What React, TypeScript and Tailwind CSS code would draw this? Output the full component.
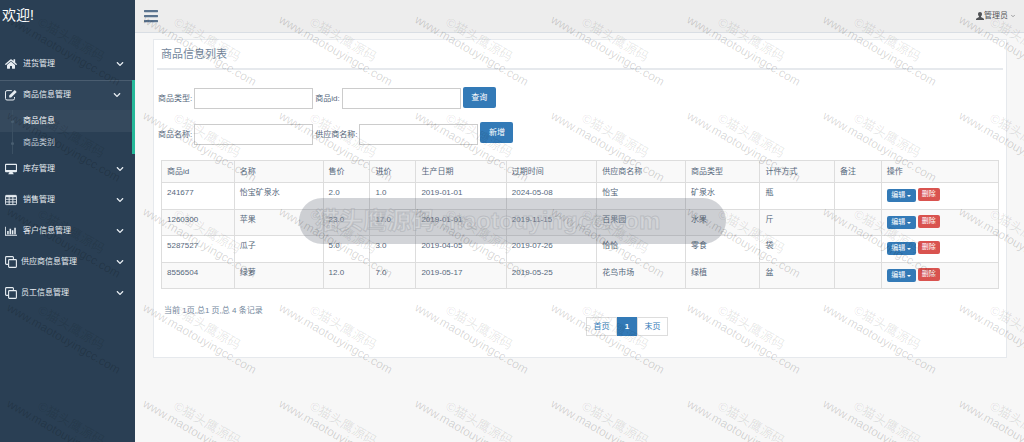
import { FaBars, FaChevronDown, FaHome } from 'react-icons/fa';
import { ChevronDown } from 'lucide-react';

type IconProps = { className?: string };

const EditIcon = ({ className }: IconProps) => (
  <svg viewBox="0 0 12 12" className={className} fill="none" stroke="currentColor">
    <path d="M6.800 1.600H2A1.500 1.500 0 0 0 .5 3.100v6.400A1.500 1.500 0 0 0 2 11h6a1.500 1.500 0 0 0 1.500-1.500V8" />
    <path d="M4.200 8.400V6.600L9.800 1l1.900 1.900-5.600 5.500z" fill="currentColor" stroke="none" />
  </svg>
);

const DesktopIcon = ({ className }: IconProps) => (
  <svg viewBox="0 0 12 12" className={className} fill="currentColor">
    <path
      fillRule="evenodd"
      d="M.9.8h10.200c.5 0 .9.4.9.9v6.600c0 .5-.4.9-.9.9H7.600l.5 1.400h.6v.7H3.300v-.7h.6l.5-1.400H.9A.9.9 0 0 1 0 8.300V1.700C0 1.200.4.8.9.8zM1.100 1.900v5h9.800v-5z"
    />
  </svg>
);

const TableIcon = ({ className }: IconProps) => (
  <svg viewBox="0 0 13 12" className={className} fill="none" stroke="currentColor">
    <rect x="0.5" y="1" width="12" height="10" rx="0.8" />
    <path d="M1 2h11" strokeWidth="2" />
    <path d="M1 5.2h11M1 8.1h11M4.5 2v9M8.5 2v9" />
  </svg>
);

const BarChartIcon = ({ className }: IconProps) => (
  <svg viewBox="0 0 14 12" className={className} fill="currentColor">
    <path d="M0 1h1v9.500h13v1H0zM2.500 6h1.800v3.700H2.500zM5.300 3.500h1.800v6.200H5.300zM8 5h1.800v4.700H8zM10.800 2.200h1.800v7.500h-1.800z" />
  </svg>
);

const CloneIcon = ({ className }: IconProps) => (
  <svg viewBox="0 0 12 12" className={className} fill="none" stroke="currentColor" strokeWidth="1.1">
    <rect x="3.6" y="3.6" width="7.8" height="7.8" rx="0.8" />
    <path d="M3.6 8.4H1.4a.8.8 0 0 1-.8-.8V1.4a.8.8 0 0 1 .8-.8h6.2a.8.8 0 0 1 .8.8v2.2" />
  </svg>
);

const UserIcon = ({ className }: IconProps) => (
  <svg viewBox="0 0 16 16" className={className} fill="currentColor">
    <path d="M8 0c2.500 0 4 1.800 4 4.300 0 1.700-.8 3.300-2 4.200v1.200c0 .5.300.8.800 1l3.700 1.600c.9.400 1.500 1 1.500 2V16H0v-1.700c0-1 .6-1.600 1.500-2l3.700-1.600c.5-.2.8-.5.8-1V8.500C4.800 7.600 4 6 4 4.300 4 1.800 5.500 0 8 0z" />
  </svg>
);

const menu = [
  { label: '进货管理', icon: FaHome },
  {
    label: '商品信息管理',
    icon: EditIcon,
    children: ['商品信息', '商品类别'],
  },
  { label: '库存管理', icon: DesktopIcon },
  { label: '销售管理', icon: TableIcon },
  { label: '客户信息管理', icon: BarChartIcon },
  { label: '供应商信息管理', icon: CloneIcon },
  { label: '员工信息管理', icon: CloneIcon },
];

const columns = [
  { title: '商品id', width: 'w-[8.7%]' },
  { title: '名称', width: 'w-[10.6%]' },
  { title: '售价', width: 'w-[5.6%]' },
  { title: '进价', width: 'w-[5.5%]' },
  { title: '生产日期', width: 'w-[10.8%]' },
  { title: '过期时间', width: 'w-[10.8%]' },
  { title: '供应商名称', width: 'w-[10.6%]' },
  { title: '商品类型', width: 'w-[8.9%]' },
  { title: '计件方式', width: 'w-[8.9%]' },
  { title: '备注', width: 'w-[5.6%]' },
  { title: '操作', width: 'w-[14%]' },
];

const goods = [
  ['241677', '怡宝矿泉水', '2.0', '1.0', '2019-01-01', '2024-05-08', '怡宝', '矿泉水', '瓶', ''],
  ['1260300', '苹果', '23.0', '17.0', '2019-01-01', '2019-11-15', '百果园', '水果', '斤', ''],
  ['5287527', '瓜子', '5.0', '3.0', '2019-04-05', '2019-07-26', '恰恰', '零食', '袋', ''],
  ['8556504', '绿萝', '12.0', '7.0', '2019-05-17', '2019-05-25', '花鸟市场', '绿植', '盆', ''],
];

const Sidebar = () => (
  <aside className="w-[135px] shrink-0 bg-[#2a3f54] text-[#e7edf2]">
    <h1 className="h-[48px] pl-[2px] pt-[5px] text-[14px] leading-[20px] text-white">欢迎!</h1>
    <nav>
      {menu.map((item) => (
        <div key={item.label} className={item.children ? '-mb-px mt-px border-r-[3px] border-[#26b99a]' : ''}>
          <button
            type="button"
            className={`flex w-full items-center pl-[5px] pr-[11px] text-left text-[8px] ${
              item.children ? 'h-[30px] border-t border-[#4a5d70] bg-[#30455a] pb-[2px]' : 'h-[31px]'
            }`}
          >
            <item.icon className="h-[12px] w-[12px] shrink-0" />
            <span className={`grow whitespace-nowrap ${item.icon === CloneIcon ? 'ml-[4px]' : 'ml-[6px]'}`}>
              {item.label}
            </span>
            <FaChevronDown className="h-[8px] w-[8px] shrink-0" />
          </button>
          {item.children && (
            <ul className="text-[8px]">
              {item.children.map((child, i) => (
                <li key={child} className={i === 0 ? 'bg-[#35495d]' : ''}>
                  <a
                    href="#"
                    className={`flex h-[22px] items-center pl-[11px] ${i === 0 ? 'text-white' : 'text-[#c4cfda]'}`}
                  >
                    <span className="flex h-full w-[3px] flex-col items-center">
                      <span className="w-px grow bg-[#3b5063]" />
                      <span className="h-[3px] w-[3px] rounded-full bg-[#4a5f72]" />
                      <span className="w-px grow bg-[#3b5063]" />
                    </span>
                    <span className="ml-[9px]">{child}</span>
                  </a>
                </li>
              ))}
            </ul>
          )}
        </div>
      ))}
    </nav>
  </aside>
);

const TopBar = () => (
  <header className="flex h-[33px] items-center justify-between border-b border-[#d9dee4] bg-[#ededed] pl-[9px] pr-[8px]">
    <button type="button" aria-label="菜单" className="text-[#5a738e]">
      <FaBars className="h-[16px] w-[14px]" />
    </button>
    <button type="button" className="flex items-center text-[8px] text-[#515356]">
      <UserIcon className="h-[8px] w-[8px]" />
      管理员
      <ChevronDown className="ml-[2px] h-[6px] w-[6px]" />
    </button>
  </header>
);

const Field = ({ id, label }: { id: string; label: string }) => (
  <>
    <label htmlFor={id} className="mr-[2px]">
      {label}
    </label>
    <input id={id} type="text" className="mr-[2px] h-[21px] w-[119px] border border-[#ccc] bg-white px-1" />
  </>
);

const SearchForm = () => (
  <form className="px-[1px] pt-[17px] text-[8px]">
    <div className="flex h-[35px] items-start">
      <div className="flex items-center pt-px">
        <Field id="type" label="商品类型:" />
        <Field id="goods-id" label="商品id:" />
      </div>
      <button type="button" className="h-[21px] w-[33px] rounded-[2px] bg-[#337ab7] text-white">
        查询
      </button>
    </div>
    <div className="flex items-start">
      <div className="flex items-center pt-[2px]">
        <Field id="goods-name" label="商品名称:" />
        <Field id="supplier" label="供应商名称:" />
      </div>
      <button type="button" className="h-[21px] w-[33px] rounded-[2px] bg-[#337ab7] text-white">
        新增
      </button>
    </div>
  </form>
);

const GoodsTable = () => (
  <table className="w-full table-fixed border-collapse text-left text-[8px]">
    <thead>
      <tr className="h-[22px] bg-[#f9f9f9]">
        {columns.map((col) => (
          <th key={col.title} className={`border border-[#ddd] px-[5px] font-normal ${col.width}`}>
            {col.title}
          </th>
        ))}
      </tr>
    </thead>
    <tbody>
      {goods.map((row, i) => (
        <tr key={row[0]} className={i % 2 ? 'h-[26px] bg-[#f9f9f9]' : 'h-[27px] bg-white'}>
          {row.map((cell, j) => (
            <td key={j} className="border border-[#ddd] px-[5px] pt-[4px] align-top leading-[12px]">
              {cell}
            </td>
          ))}
          <td className="border border-[#ddd] px-[5px] pt-[5px] align-top">
            <div className="flex items-start gap-[2px] text-white">
              <button
                type="button"
                className="mt-px flex h-[13px] w-[29px] items-center justify-center rounded-[2px] bg-[#337ab7] text-[7px]"
              >
                编辑
                <span className="ml-[2px] border-x-2 border-t-2 border-x-transparent border-t-white" />
              </button>
              <button
                type="button"
                className="flex h-[13px] w-[22px] items-center justify-center rounded-[2px] bg-[#d9534f] text-[7px]"
              >
                删除
              </button>
            </div>
          </td>
        </tr>
      ))}
    </tbody>
  </table>
);

const Pagination = () => (
  <nav className="flex justify-center pl-[94px] text-[8px] text-[#337ab7]">
    <a href="#" className="flex h-[19px] w-[31px] items-center justify-center border border-[#ddd]">
      首页
    </a>
    <a href="#" className="flex h-[19px] w-[20px] items-center justify-center bg-[#337ab7] font-bold text-white">
      1
    </a>
    <a href="#" className="flex h-[19px] w-[31px] items-center justify-center border border-[#ddd]">
      末页
    </a>
  </nav>
);

// Repeated diagonal stamp over the whole page
const Watermark = () => (
  <svg className="pointer-events-none absolute inset-0 h-full w-full" aria-hidden="true">
    <defs>
      <g id="stamp" fill="#000" transform="rotate(30)">
        <text fontSize="12" fillOpacity="0.16">
          www.maotouyingcc.com
        </text>
        <text x="28" y="-13" fontSize="13" fillOpacity="0.1">
          ©猫头鹰源码
        </text>
      </g>
    </defs>
    {Array.from({ length: 6 }, (_, row) =>
      Array.from({ length: 9 }, (_, col) => (
        <use key={`${row}-${col}`} href="#stamp" x={6 + col * 136} y={-74 + row * 96} />
      ))
    )}
  </svg>
);

const Banner = () => (
  <div
    className="pointer-events-none absolute left-[299px] top-[198px] flex h-[46px] w-[427px] items-center rounded-full bg-[#5f6672]/28 pl-[16px]"
    aria-hidden="true"
  >
    <span className="whitespace-nowrap text-[24px] font-bold text-white/15 [-webkit-text-stroke:1px_#9a9da466]">
      猫头鹰源码 maotouyingcc.com
    </span>
  </div>
);

const App = () => (
  <div className="relative flex min-h-screen overflow-hidden bg-[#f7f7f7] font-['Liberation_Sans','Noto_Sans_CJK_SC',sans-serif] text-[#56687c]">
    <Sidebar />
    <div className="min-w-0 grow">
      <TopBar />
      <main className="pb-4 pl-[18px] pr-[17px] pt-[6px]">
        <section className="border border-[#e6e9ed] bg-white px-[3px] pb-[21px]">
          <h2 className="border-b-2 border-[#e6e9ed] pb-[5px] pl-[4px] pt-[5px] text-[11px] leading-[18px] text-[#73879c]">
            商品信息列表
          </h2>
          <SearchForm />
          <div className="px-[4px] pt-[15px]">
            <GoodsTable />
          </div>
          <p className="pl-[7px] pt-[15px] text-[8px] leading-[13px] text-[#73879c]">
            当前 1页,总1 页,总 4 条记录
          </p>
          <Pagination />
        </section>
      </main>
    </div>
    <Banner />
    <Watermark />
  </div>
);

export default App;
